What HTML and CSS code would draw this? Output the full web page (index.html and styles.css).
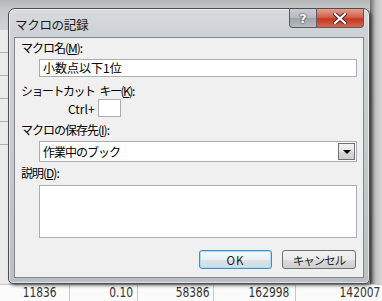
FILE: index.html
```html
<!DOCTYPE html>
<html lang="ja">
<head>
  <meta charset="UTF-8">
  <title>マクロの記録</title>
  <link rel="stylesheet" href="styles.css">
</head>
<body>
  <div class="screen">
    <!-- Sheet behind the dialog -->
    <div class="backdrop">
      <div class="left-cells">
        <span></span><span></span><span></span><span></span><span></span>
      </div>
      <div class="right-cells"></div>
    </div>
    <div class="sheet-row">
      <span class="cell c1"><span>11836</span></span>
      <span class="cell c2"><span>0.10</span></span>
      <span class="cell c3"><span>58386</span></span>
      <span class="cell c4"><span>162998</span></span>
      <span class="cell c5"><span>142007</span></span>
    </div>

    <!-- Dialog -->
    <div class="dialog">
      <div class="titlebar">
        <span class="title">マクロの記録</span>
        <div class="caption-buttons">
          <span class="cap-btn help">?</span>
          <span class="cap-btn close">
            <svg width="14" height="11" viewBox="0 0 14 11">
              <path d="M2 1 L12 10 M12 1 L2 10" stroke="#4a2020" stroke-width="4" stroke-linecap="square"/>
              <path d="M2 1 L12 10 M12 1 L2 10" stroke="#fff" stroke-width="2.2" stroke-linecap="square"/>
            </svg>
          </span>
        </div>
      </div>

      <div class="client">
        <div class="label">マクロ名(<u>M</u>):</div>
        <div class="textbox name-box">小数点以下1位</div>

        <div class="label gap-lg">ショートカット<span class="sp"></span>キー(<u>K</u>):</div>
        <div class="ctrl-row">
          <span>Ctrl+</span>
          <span class="key-box"></span>
        </div>

        <div class="label gap-md">マクロの保存先(<u>I</u>):</div>
        <div class="combo">
          <span>作業中のブック</span>
          <span class="drop-btn"></span>
        </div>

        <div class="label gap-sm">説明(<u>D</u>):</div>
        <div class="textarea"></div>

        <div class="button-row">
          <span class="btn default">OK</span>
          <span class="btn">キャンセル</span>
        </div>
      </div>
    </div>
  </div>
</body>
</html>
```

FILE: styles.css
```css
/* General */
body {
  margin: 0;
  font-family: "Noto Sans CJK JP", "Noto Sans", sans-serif;
  font-size: 12px;
  color: #000;
}

.screen {
  position: relative;
  width: 382px;
  height: 301px;
  overflow: hidden;
  background: #f4f4f4;
}

/* Sheet behind */
.backdrop {
  height: 284px;
  display: flex;
  justify-content: space-between;
  background: linear-gradient(180deg, #b4b6b8 0, #c4c6c8 8px, #d8d8d8 40px, #d0d0d0 100%);
}

.left-cells {
  width: 9px;
  margin-top: 30px;
  display: flex;
  flex-direction: column;
  background: #ebebeb;
}

.left-cells span {
  height: 22px;
  border-bottom: 1px solid #b0b0b0;
}

.right-cells {
  width: 12px;
  background: linear-gradient(90deg, #6b6b6b 0, #9a9a9a 3px, #c3c3c3 6px, #d6d6d6 100%);
}

.sheet-row {
  height: 17px;
  display: flex;
  background: #fbfbfb;
  border-top: 1px solid #c8c8c8;
}

.cell {
  display: flex;
  justify-content: flex-end;
  align-items: flex-start;
  height: 16px;
  box-sizing: border-box;
  font-family: "DejaVu Sans Condensed", "DejaVu Sans", sans-serif;
  font-size: 13.5px;
  line-height: 15px;
  color: #333;
  border-right: 1px solid #c8c8c8;
}

.cell span {
  transform: scale(0.88, 1.1);
  transform-origin: right center;
}

.c1 { width: 70px; padding-right: 12px; }
.c2 { width: 68px; padding-right: 4px; }
.c3 { width: 76px; padding-right: 3px; }
.c4 { width: 82px; padding-right: 6px; }
.c5 { width: 86px; padding-right: 2px; border-right: none; }

/* Dialog frame */
.dialog {
  position: absolute;
  left: 8px;
  top: 8px;
  width: 362px;
  height: 276px;
  box-sizing: border-box;
  border: 1px solid #4a4e54;
  border-radius: 7px 7px 5px 5px;
  padding: 0 5px 5px;
  display: flex;
  flex-direction: column;
  background: linear-gradient(180deg, #d9dcdf 0, #cfd3d7 20px, #c4c8cc 60%, #bcc0c4 100%);
  box-shadow: 2px 2px 3px rgba(0, 0, 0, 0.45), inset 0 0 0 1px rgba(255, 255, 255, 0.55);
}

.titlebar {
  height: 28px;
  display: flex;
  justify-content: space-between;
  align-items: flex-start;
}

.title {
  margin: 6px 0 0 1px;
  font-size: 12.5px;
  color: #1a1a1a;
  letter-spacing: -0.3px;
}

.caption-buttons {
  display: flex;
}

.cap-btn {
  height: 18px;
  display: flex;
  justify-content: center;
  align-items: center;
  border: 1px solid #5a5e64;
  border-top: none;
}

.help {
  width: 26px;
  border-radius: 0 0 0 4px;
  background: linear-gradient(180deg, #c9cdd2 0, #b6babf 50%, #9ea3a9 51%, #b9bdc2 100%);
  color: #fff;
  font-family: "DejaVu Sans", sans-serif;
  font-weight: bold;
  font-size: 13px;
  text-shadow: 0 0 2px #333, 0 0 1px #333;
}

.close {
  width: 46px;
  border-left: none;
  border-radius: 0 0 4px 0;
  background: linear-gradient(180deg, #e4a08f 0, #d4624a 45%, #c2391f 55%, #d8664a 100%);
}

/* Client area */
.client {
  flex: 1;
  background: #f0f0f0;
  border: 1px solid #82878d;
  padding: 2px 6px 0;
  display: flex;
  flex-direction: column;
  align-items: flex-start;
  letter-spacing: -1px;
}

.label {
  height: 16px;
  line-height: 16px;
}

.label u {
  text-decoration-thickness: 1px;
  text-underline-offset: 1px;
}

.sp {
  display: inline-block;
  width: 5px;
}

.gap-lg { margin-top: 6px; letter-spacing: -1.5px; }
.gap-md { margin-top: 5px; }
.gap-sm { margin-top: 3px; }

.textbox,
.combo,
.textarea {
  box-sizing: border-box;
  margin-left: 18px;
  width: 318px;
  background: #fff;
  border: 1px solid #abadb3;
}

.name-box {
  margin-top: 3px;
  height: 18px;
  line-height: 16px;
  padding-left: 3px;
  letter-spacing: 0;
}

.ctrl-row {
  height: 18px;
  display: flex;
  align-items: center;
  margin-left: 47px;
  gap: 3px;
  letter-spacing: 0;
}

.key-box {
  width: 23px;
  height: 18px;
  box-sizing: border-box;
  background: #fff;
  border: 1px solid #abadb3;
}

.combo {
  margin-top: 3px;
  height: 21px;
  padding: 0 1px 0 3px;
  display: flex;
  justify-content: space-between;
  align-items: center;
  letter-spacing: -1px;
}

.drop-btn {
  width: 17px;
  height: 17px;
  box-sizing: border-box;
  border: 1px solid #707070;
  background: linear-gradient(180deg, #f2f2f2 0, #e6e6e6 50%, #d6d6d6 51%, #cfcfcf 100%);
  display: flex;
  justify-content: center;
  align-items: center;
}

.drop-btn::after {
  content: "";
  border-left: 4px solid transparent;
  border-right: 4px solid transparent;
  border-top: 4px solid #000;
}

.textarea {
  margin-top: 4px;
  height: 53px;
}

.button-row {
  align-self: stretch;
  margin-top: 12px;
  display: flex;
  justify-content: flex-end;
  gap: 10px;
  padding-right: 1px;
}

.btn {
  width: 74px;
  height: 19px;
  box-sizing: border-box;
  border: 1px solid #707070;
  border-radius: 3px;
  background: linear-gradient(180deg, #f2f2f2 0, #ebebeb 50%, #dddddd 51%, #cfcfcf 100%);
  display: flex;
  justify-content: center;
  align-items: center;
  font-size: 11.5px;
  color: #222;
}

.btn.default {
  width: 73px;
  border-color: #3c8fc4;
  box-shadow: inset 0 0 0 1px #a8def7;
  background: linear-gradient(180deg, #f4f8fa 0, #ebf1f4 50%, #dbe4e9 51%, #d0dce2 100%);
  letter-spacing: 1px;
}
```
